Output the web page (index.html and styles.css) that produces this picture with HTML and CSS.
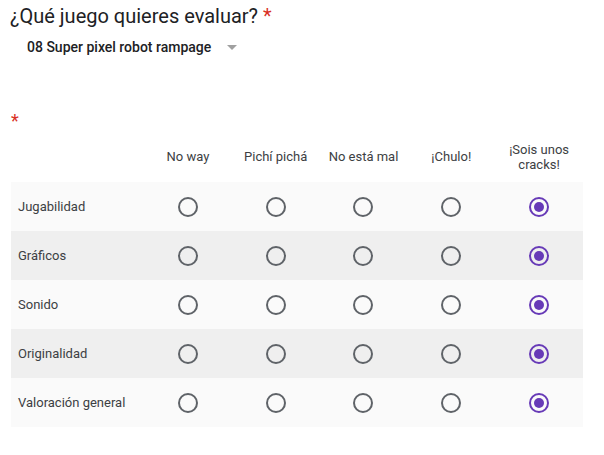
FILE: index.html
```html
<!DOCTYPE html>
<html lang="es">
<head>
<meta charset="utf-8">
<link rel="stylesheet" href="styles.css">
</head>
<body>
<div class="page">
  <div class="question">
    <div class="title">¿Qué juego quieres evaluar? <span class="req">*</span></div>
    <div class="select">
      <span class="select-text">08 Super pixel robot rampage</span>
      <span class="arrow"></span>
    </div>
  </div>
  <div class="grid-q">
    <div class="req star">*</div>
    <div class="grid">
      <div class="row head">
        <div class="label"></div>
        <div class="cell">No way</div>
        <div class="cell">Pichí pichá</div>
        <div class="cell">No está mal</div>
        <div class="cell">¡Chulo!</div>
        <div class="cell">¡Sois unos cracks!</div>
      </div>
      <div class="row odd">
        <div class="label">Jugabilidad</div>
        <div class="cell"><span class="radio"></span></div>
        <div class="cell"><span class="radio"></span></div>
        <div class="cell"><span class="radio"></span></div>
        <div class="cell"><span class="radio"></span></div>
        <div class="cell"><span class="radio on"></span></div>
      </div>
      <div class="row even">
        <div class="label">Gráficos</div>
        <div class="cell"><span class="radio"></span></div>
        <div class="cell"><span class="radio"></span></div>
        <div class="cell"><span class="radio"></span></div>
        <div class="cell"><span class="radio"></span></div>
        <div class="cell"><span class="radio on"></span></div>
      </div>
      <div class="row odd">
        <div class="label">Sonido</div>
        <div class="cell"><span class="radio"></span></div>
        <div class="cell"><span class="radio"></span></div>
        <div class="cell"><span class="radio"></span></div>
        <div class="cell"><span class="radio"></span></div>
        <div class="cell"><span class="radio on"></span></div>
      </div>
      <div class="row even">
        <div class="label">Originalidad</div>
        <div class="cell"><span class="radio"></span></div>
        <div class="cell"><span class="radio"></span></div>
        <div class="cell"><span class="radio"></span></div>
        <div class="cell"><span class="radio"></span></div>
        <div class="cell"><span class="radio on"></span></div>
      </div>
      <div class="row odd">
        <div class="label">Valoración general</div>
        <div class="cell"><span class="radio"></span></div>
        <div class="cell"><span class="radio"></span></div>
        <div class="cell"><span class="radio"></span></div>
        <div class="cell"><span class="radio"></span></div>
        <div class="cell"><span class="radio on"></span></div>
      </div>
    </div>
  </div>
</div>
</body>
</html>
```
FILE: styles.css
```css
html, body {
  margin: 0;
  padding: 0;
  background: #ffffff;
}
body {
  font-family: Roboto, "Liberation Sans", Arial, sans-serif;
  color: #202124;
}
.page {
  padding: 3px 0 0 10px;
  width: 573px;
}
.title {
  font-size: 20px;
  line-height: 26px;
  color: #202124;
}
.req {
  color: #d93025;
}
.select {
  display: flex;
  align-items: center;
  padding: 8px 0 0 17px;
  height: 20px;
}
.select-text {
  font-size: 14px;
  font-weight: 500;
  color: #202124;
}
.arrow {
  width: 0;
  height: 0;
  border-left: 5px solid transparent;
  border-right: 5px solid transparent;
  border-top: 5px solid #a0a0a0;
  margin-left: 16px;
  margin-top: 1px;
}
.grid-q {
  padding-top: 55px;
}
.star {
  font-size: 18px;
  line-height: 18px;
  height: 18px;
  padding-left: 1px;
}
.grid {
  margin-top: 8px;
  margin-left: 1px;
}
.row {
  display: grid;
  grid-template-columns: 133px repeat(5, 1fr);
  align-items: center;
  height: 49px;
}
.row.head {
  box-sizing: border-box;
  height: 44px;
  padding-bottom: 7px;
}
.row.odd {
  background: #fafafa;
}
.row.even {
  background: #efefef;
}
.label {
  font-size: 13px;
  padding-left: 7px;
  color: #3c4043;
}
.cell {
  display: flex;
  justify-content: center;
  text-align: center;
  font-size: 13px;
  line-height: 15px;
  color: #3c4043;
  padding: 0 4px;
}
.radio {
  box-sizing: border-box;
  width: 20px;
  height: 20px;
  border: 2px solid #5f6368;
  border-radius: 50%;
  display: flex;
  align-items: center;
  justify-content: center;
}
.radio.on {
  border-color: #673ab7;
}
.radio.on::after {
  content: "";
  width: 10px;
  height: 10px;
  border-radius: 50%;
  background: #673ab7;
}
```
